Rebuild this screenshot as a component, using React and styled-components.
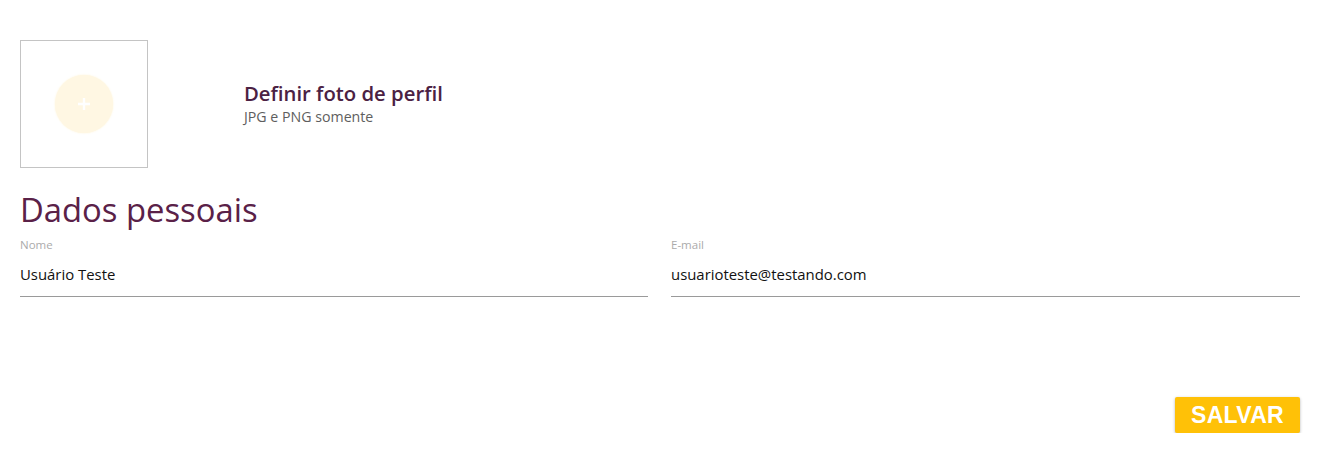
import React from "react";
import styled, { createGlobalStyle } from "styled-components";

const Global = createGlobalStyle`
  html, body { margin: 0; padding: 0; background: #fff; }
  body { font-family: "Open Sans", "Noto Sans", sans-serif; }
`;

const Page = styled.div`
  padding: 40px 20px 0 20px;
  display: flex;
  flex-direction: column;
`;

const ProfileRow = styled.div`
  display: flex;
  align-items: center;
`;

const PhotoBox = styled.div`
  width: 126px;
  height: 126px;
  border: 1px solid #c4c4c4;
  display: flex;
  align-items: center;
  justify-content: center;
`;

const AddCircle = styled.div`
  width: 58px;
  height: 58px;
  border-radius: 50%;
  background: #fff7e3;
  box-shadow: 0 0 2px rgba(255, 240, 200, 0.8);
  display: flex;
  align-items: center;
  justify-content: center;
`;

const PhotoText = styled.div`
  margin-left: 96px;
  display: flex;
  flex-direction: column;
  margin-top: -2px;
`;

const PhotoTitle = styled.div`
  font-family: "Open Sans", sans-serif;
  font-weight: 600;
  font-size: 20.3px;
  color: #4b2143;
  line-height: 24px;
`;

const PhotoHint = styled.div`
  font-family: "Open Sans", sans-serif;
  font-size: 14.2px;
  color: #5e5e5e;
  line-height: 18px;
  margin-top: 3px;
`;

const SectionTitle = styled.h2`
  margin: 23px 0 0 0;
  font-family: "Open Sans", sans-serif;
  font-weight: 400;
  font-size: 32.8px;
  line-height: 38px;
  color: #5a2148;
`;

const Fields = styled.div`
  display: grid;
  grid-template-columns: 628px 629px;
  column-gap: 23px;
  margin-top: 9px;
`;

const Field = styled.label`
  display: flex;
  flex-direction: column;
  border-bottom: 1px solid #9a9a9a;
`;

const FieldLabel = styled.span`
  font-family: "Open Sans", sans-serif;
  font-size: 11.5px;
  line-height: 14px;
  color: #ababab;
`;

const FieldValue = styled.span`
  font-family: "Open Sans", sans-serif;
  font-size: 14.9px;
  line-height: 20px;
  color: #111;
  margin-top: 12px;
  padding-bottom: 12px;
`;

const Actions = styled.div`
  display: flex;
  justify-content: flex-end;
  margin-top: 100px;
`;

const SaveButton = styled.button`
  width: 125px;
  height: 36px;
  border: none;
  border-radius: 2px;
  background: #ffc107;
  color: #fff;
  font-family: "Liberation Sans", Arial, sans-serif;
  font-weight: 700;
  font-size: 23px;
  letter-spacing: 0.3px;
  box-shadow: 0 1px 3px rgba(0, 0, 0, 0.3);
  cursor: pointer;
  padding: 0;
`;

export default function App() {
  return (
    <>
      <Global />
      <Page>
        <ProfileRow>
          <PhotoBox>
            <AddCircle>
              <svg width="14" height="14" viewBox="0 0 14 14">
                <path d="M7 1v12M1 7h12" stroke="#fff" strokeWidth="2.4" />
              </svg>
            </AddCircle>
          </PhotoBox>
          <PhotoText>
            <PhotoTitle>Definir foto de perfil</PhotoTitle>
            <PhotoHint>JPG e PNG somente</PhotoHint>
          </PhotoText>
        </ProfileRow>
        <SectionTitle>Dados pessoais</SectionTitle>
        <Fields>
          <Field>
            <FieldLabel>Nome</FieldLabel>
            <FieldValue>Usuário Teste</FieldValue>
          </Field>
          <Field>
            <FieldLabel>E-mail</FieldLabel>
            <FieldValue>usuarioteste@testando.com</FieldValue>
          </Field>
        </Fields>
        <Actions>
          <SaveButton>SALVAR</SaveButton>
        </Actions>
      </Page>
    </>
  );
}
